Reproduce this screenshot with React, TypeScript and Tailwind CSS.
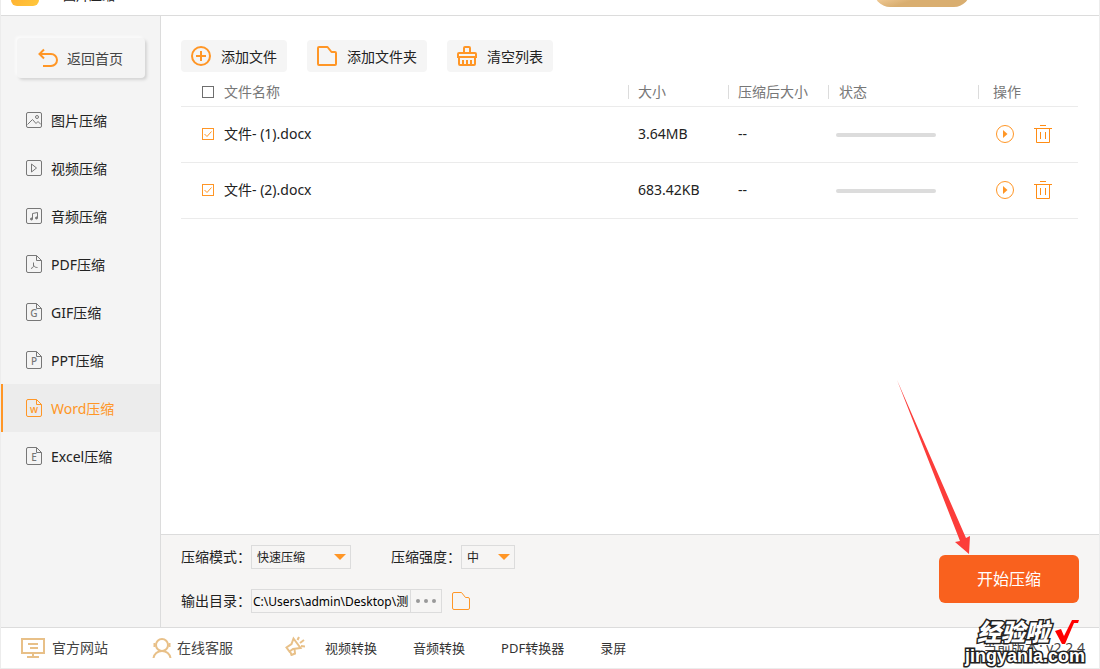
import React from 'react';
import clsx from 'clsx';

type IconKind = 'image' | 'video' | 'audio' | 'pdf' | 'G' | 'P' | 'w' | 'E';

interface NavItem {
  label: string;
  icon: IconKind;
  active?: boolean;
}

const navItems: NavItem[] = [
  { label: '图片压缩', icon: 'image' },
  { label: '视频压缩', icon: 'video' },
  { label: '音频压缩', icon: 'audio' },
  { label: 'PDF压缩', icon: 'pdf' },
  { label: 'GIF压缩', icon: 'G' },
  { label: 'PPT压缩', icon: 'P' },
  { label: 'Word压缩', icon: 'w', active: true },
  { label: 'Excel压缩', icon: 'E' },
];

const files = [
  { name: '文件- (1).docx', size: '3.64MB', compressed: '--' },
  { name: '文件- (2).docx', size: '683.42KB', compressed: '--' },
];

function NavIcon({ kind }: { kind: IconKind }) {
  const square = kind === 'image' || kind === 'video' || kind === 'audio';

  return (
    <svg width="16" height="18" viewBox="0 0 16 18" fill="none" stroke="currentColor" className="shrink-0">
      {square ? (
        <rect x="0.5" y="1.5" width="15" height="15" rx="1.5" />
      ) : (
        <path d="M10.5.5H2A1.5 1.5 0 0 0 .5 2v14A1.5 1.5 0 0 0 2 17.5h12a1.5 1.5 0 0 0 1.5-1.5V5.5zM10.5.5v5h5" />
      )}
      {kind === 'image' && (
        <>
          <circle cx="11" cy="6" r="1.5" />
          <path d="M1.5 13.5l5-5 3.5 4 2-2 3 3" />
        </>
      )}
      {kind === 'video' && <path d="M5.5 5v8l5-4z" />}
      {kind === 'audio' && (
        <>
          <path d="M6.5 12V6.5l5-1V11" />
          <circle cx="5.5" cy="12" r="1" fill="currentColor" />
          <circle cx="10.5" cy="11" r="1" fill="currentColor" />
        </>
      )}
      {kind === 'pdf' && <path d="M7.5 7.5v3.5M5 13.5c1.5-.5 2.5-1.5 2.7-3 .7 1.5 2 2 3.8 2" />}
      {!square && kind !== 'pdf' && (
        <text
          x="8"
          y="14"
          textAnchor="middle"
          fill="currentColor"
          stroke="none"
          className="font-['Noto_Sans',sans-serif] text-[10px] font-medium"
        >
          {kind}
        </text>
      )}
    </svg>
  );
}

function BackIcon() {
  return (
    <svg width="20" height="20" viewBox="0 0 20 20" fill="none" stroke="#ff9626" strokeWidth="2">
      <path d="M6 1.5L1.5 6 6 10.5M1.5 6H13a6 6 0 0 1 0 12H5" />
    </svg>
  );
}

function AddIcon() {
  return (
    <svg width="20" height="20" viewBox="0 0 20 20" fill="none" stroke="#ff9626" strokeWidth="2">
      <circle cx="10" cy="10" r="9" />
      <path d="M10 5v10M5 10h10" />
    </svg>
  );
}

function FolderIcon() {
  return (
    <svg width="20" height="20" viewBox="0 0 20 20" fill="none" stroke="#ff9626" strokeWidth="2" strokeLinejoin="round">
      <path d="M1 2a1 1 0 0 1 1-1h8.5l4 5H18a1 1 0 0 1 1 1v11a1 1 0 0 1-1 1H2a1 1 0 0 1-1-1z" />
    </svg>
  );
}

function BrushIcon() {
  return (
    <svg width="20" height="20" viewBox="0 0 20 20" fill="none" stroke="#ff9626" strokeWidth="2">
      <path d="M7 7V2q0-1 1-1h4q1 0 1 1v5M1 11V8q0-1 1-1h16q1 0 1 1v3zM2 11v7q0 1 1 1h14q1 0 1-1v-7" />
      <path d="M6 14v5M10 14v5M14 14v5" />
    </svg>
  );
}

function PlayIcon() {
  return (
    <svg width="18" height="18" viewBox="0 0 18 18" fill="none" stroke="#ff9626">
      <circle cx="9" cy="9" r="8.5" />
      <path d="M7 5l4.5 4L7 13z" fill="#ff9626" stroke="none" />
    </svg>
  );
}

function TrashIcon() {
  return (
    <svg width="18" height="18" viewBox="0 0 18 18" fill="none" stroke="#ff8c14">
      <path d="M6 .5h6M0 3.5h18M2.5 3.5v14h13v-14M6.500 7v7M11.500 7v7" />
    </svg>
  );
}

function Checkbox({ label, checked }: { label: string; checked?: boolean }) {
  return (
    <span className="relative inline-flex size-3 shrink-0">
      <input
        type="checkbox"
        aria-label={label}
        defaultChecked={checked}
        className="peer size-3 appearance-none border border-[#6e6e6e] bg-white checked:border-[#ff9626]"
      />
      <svg
        viewBox="0 0 12 12"
        fill="none"
        stroke="#ff9626"
        className="pointer-events-none absolute inset-0 hidden peer-checked:block"
      >
        <path d="M2.5 6L5 8.500 9.500 3.500" />
      </svg>
    </span>
  );
}

function SelectBox({ id, value, className }: { id: string; value: string; className: string }) {
  return (
    <span className={clsx('relative inline-flex', className)}>
      <select
        id={id}
        className="h-6 w-full appearance-none border border-[#dcdcdc] bg-[#f6f5f4] pt-0.5 pl-[5px] text-xs text-[#222]"
      >
        <option>{value}</option>
      </select>
      <svg
        width="12"
        height="6"
        viewBox="0 0 12 6"
        fill="#ff9626"
        className="pointer-events-none absolute top-[9px] right-[5px]"
      >
        <path d="M0 0h12L6 6z" />
      </svg>
    </span>
  );
}

function Toolbar() {
  const actions = [
    { label: '添加文件', icon: <AddIcon /> },
    { label: '添加文件夹', icon: <FolderIcon /> },
    { label: '清空列表', icon: <BrushIcon /> },
  ];

  return (
    <div className="flex gap-5">
      {actions.map((a) => (
        <button key={a.label} type="button" className="flex h-8 items-center gap-2.5 rounded bg-[#f5f5f5] px-2.5">
          {a.icon}
          <span className="pt-0.5">{a.label}</span>
        </button>
      ))}
    </div>
  );
}

function FileTable() {
  const th = 'h-[31px] border-b border-[#ebebeb] px-0 pt-0.5 pb-0 font-normal';
  const td = 'h-14 border-b border-[#ebebeb]';
  const divider = 'block border-l border-[#dcdcdc] leading-[14px]';

  return (
    <table className="mt-1 w-full table-fixed border-separate border-spacing-0 text-left">
      <colgroup>
        <col />
        <col className="w-[100px]" />
        <col className="w-[100px]" />
        <col className="w-[150px]" />
        <col className="w-[100px]" />
      </colgroup>
      <thead className="text-[#777]">
        <tr>
          <th className={th}>
            <div className="flex items-center gap-2.5 pl-[21px]">
              <Checkbox label="全选" />
              文件名称
            </div>
          </th>
          <th className={th}>
            <span className={clsx(divider, 'pl-[9px]')}>大小</span>
          </th>
          <th className={th}>
            <span className={clsx(divider, 'pl-[9px]')}>压缩后大小</span>
          </th>
          <th className={th}>
            <span className={clsx(divider, 'pl-[10px]')}>状态</span>
          </th>
          <th className={th}>
            <span className={clsx(divider, 'pl-[14px]')}>操作</span>
          </th>
        </tr>
      </thead>
      <tbody>
        {files.map((f) => (
          <tr key={f.name}>
            <td className={clsx(td, 'pb-0.5')}>
              <div className="flex items-center gap-2.5 pl-[21px]">
                <Checkbox label={f.name} checked />
                {f.name}
              </div>
            </td>
            <td className={clsx(td, 'pb-0.5 pl-2.5')}>{f.size}</td>
            <td className={clsx(td, 'pb-0.5 pl-2.5')}>{f.compressed}</td>
            <td className={clsx(td, 'pl-2')}>
              <div className="h-1 w-[100px] rounded-full bg-[#dcdcdc]" />
            </td>
            <td className={clsx(td, 'pb-0.5')}>
              <div className="flex gap-5 pl-[18px]">
                <button type="button" aria-label="开始">
                  <PlayIcon />
                </button>
                <button type="button" aria-label="删除">
                  <TrashIcon />
                </button>
              </div>
            </td>
          </tr>
        ))}
      </tbody>
    </table>
  );
}

function Settings() {
  return (
    <div className="flex items-start justify-between border-t border-[#dcdcdc] bg-[#f6f5f4] py-2.5 pr-5 pl-5">
      <div className="flex flex-col gap-5 pb-1">
        <div className="flex items-center">
          <label htmlFor="mode" className="w-[70px]">
            压缩模式：
          </label>
          <SelectBox id="mode" value="快速压缩" className="w-[100px]" />
          <label htmlFor="level" className="ml-10 w-[70px]">
            压缩强度：
          </label>
          <SelectBox id="level" value="中" className="w-[54px]" />
        </div>
        <div className="flex items-center">
          <label htmlFor="output" className="w-[70px]">
            输出目录：
          </label>
          <input
            id="output"
            type="text"
            defaultValue="C:\Users\admin\Desktop\测"
            className="h-6 w-[159px] border border-r-0 border-[#dcdcdc] pl-px text-xs text-black"
          />
          <button
            type="button"
            aria-label="浏览"
            className="flex h-6 w-8 items-center justify-center gap-1 border border-[#dcdcdc]"
          >
            <span className="size-1 rounded-full bg-[#999]" />
            <span className="size-1 rounded-full bg-[#999]" />
            <span className="size-1 rounded-full bg-[#999]" />
          </button>
          <button type="button" aria-label="打开目录" className="ml-2.5">
            <svg width="18" height="18" viewBox="0 0 18 18" fill="none" stroke="#ff9626">
              <path d="M.5 2Q.5.5 2 .5h7.5l4 5H16q1.5 0 1.5 1.5v9q0 1.5-1.5 1.5H2Q.5 17.5.5 16z" />
            </svg>
          </button>
        </div>
      </div>
      <button type="button" className="mt-2.5 h-12 w-[140px] rounded-md bg-[#f9611e] text-base text-white">
        开始压缩
      </button>
    </div>
  );
}

function Footer() {
  return (
    <footer className="flex h-[41px] items-center border-t border-[#dcdcdc] bg-white pl-5 text-[#444]">
      <a href="#site" className="flex w-[131px] items-center gap-[7px]">
        <svg width="24" height="20" viewBox="0 0 24 20" fill="none" stroke="#e8c088" strokeWidth="2">
          <path d="M1 1h22v14H1zM12 15v4M6 19h12M7 6h10M9 10h8" />
        </svg>
        官方网站
      </a>
      <a href="#support" className="flex w-[133px] items-center gap-[5px]">
        <svg width="20" height="20" viewBox="0 0 20 20" fill="none" stroke="#e8c088" strokeWidth="2">
          <circle cx="10" cy="7" r="6" />
          <path d="M2.5 5v4M17.5 5v4M1.5 20c.5-4 4-7 8.5-7s8 3 8.5 7" />
        </svg>
        在线客服
      </a>
      <svg width="20" height="20" viewBox="0 0 20 20" fill="none" stroke="#e8c088" strokeWidth="2" className="mb-1">
        <path d="M8.500 2.500L15.500 12 8 13 4.500 15.500 1.500 11.500 6.500 8zM5 15l1.500 4 3.500-1.500L9.500 13M12.500 4l1.500-3M15 7l4-3M16 10l4 .5" />
      </svg>
      <nav className="ml-5 flex flex-1 gap-9 text-[13px] text-[#333]">
        <a href="#video">视频转换</a>
        <a href="#audio">音频转换</a>
        <a href="#pdf">PDF转换器</a>
        <a href="#record">录屏</a>
      </nav>
      <span className="pr-3.5">当前版本: v2.2.4</span>
    </footer>
  );
}

export default function App() {
  return (
    <div className="relative flex min-h-screen flex-col border-r border-b border-l border-[#ececec] bg-white font-['Noto_Sans','Noto_Sans_CJK_SC',sans-serif] text-sm leading-5 text-[#222]">
      <header className="flex h-4 items-end overflow-hidden border-b border-[#dcdcdc] pl-2.5">
        <span className="mb-[9px] size-7 shrink-0 rounded-md bg-linear-to-br from-[#ffa52c] to-[#ffc83c]" />
        <h1 className="mb-2.5 ml-6 flex-1 text-[13px]">图片压缩</h1>
        <button
          type="button"
          aria-label="会员"
          className="mr-[129px] mb-2 h-8 w-24 shrink-0 rounded-full bg-linear-to-br from-[#fbd7a6] from-30% to-[#d9ae70] to-60%"
        />
      </header>

      <div className="flex flex-1">
        <aside className="w-40 shrink-0 border-r border-[#dcdcdc] bg-[#f4f4f4] pt-[22px]">
          <button
            type="button"
            className="ml-4 flex h-10 w-32 items-center gap-[9px] rounded pl-[21px] text-[#444] shadow-[2px_2px_3px_#d4d4d4,-2px_-2px_2px_#fafafa]"
          >
            <BackIcon />
            <span className="pt-0.5">返回首页</span>
          </button>
          <nav className="mt-[18px]">
            {navItems.map((item) => (
              <a
                key={item.label}
                href={`#${item.icon}`}
                className={clsx(
                  'flex h-12 items-center gap-[9px] border-l-2 pl-[23px]',
                  item.active ? 'border-[#ff9626] bg-[#ececec] text-[#ff9626]' : 'border-transparent'
                )}
              >
                <span className={clsx(!item.active && 'text-[#777]')}>
                  <NavIcon kind={item.icon} />
                </span>
                <span className="pt-0.5">{item.label}</span>
              </a>
            ))}
          </nav>
        </aside>

        <main className="flex min-w-0 flex-1 flex-col">
          <div className="flex-1 pt-6 pr-[21px] pl-5">
            <Toolbar />
            <FileTable />
          </div>
          <Settings />
        </main>
      </div>

      <Footer />

      {/* Pointer towards the start button */}
      <svg
        width="74"
        height="176"
        viewBox="0 0 74 176"
        fill="#fc3d3a"
        className="pointer-events-none absolute right-[128px] bottom-[113px]"
      >
        <path d="M0 1L63 162 58 163 72 175 73 157 69 159z" />
      </svg>

      {/* Site mark */}
      <div className="pointer-events-none absolute right-3.5 bottom-0 flex flex-col items-end font-black text-white [-webkit-text-stroke:3px_#222] [paint-order:stroke]">
        <div className="flex items-center gap-1.5 pr-1.5">
          <span className="text-2xl leading-6 italic">经验啦</span>
          <svg width="24" height="24" viewBox="0 0 24 24" fill="#f00">
            <path d="M0 11l6-2 3 7L17 0h7l-1 3h-4L10 24H7z" />
          </svg>
        </div>
        <span className="font-['Liberation_Sans',sans-serif] text-lg leading-6">jingyanla.com</span>
      </div>
    </div>
  );
}
